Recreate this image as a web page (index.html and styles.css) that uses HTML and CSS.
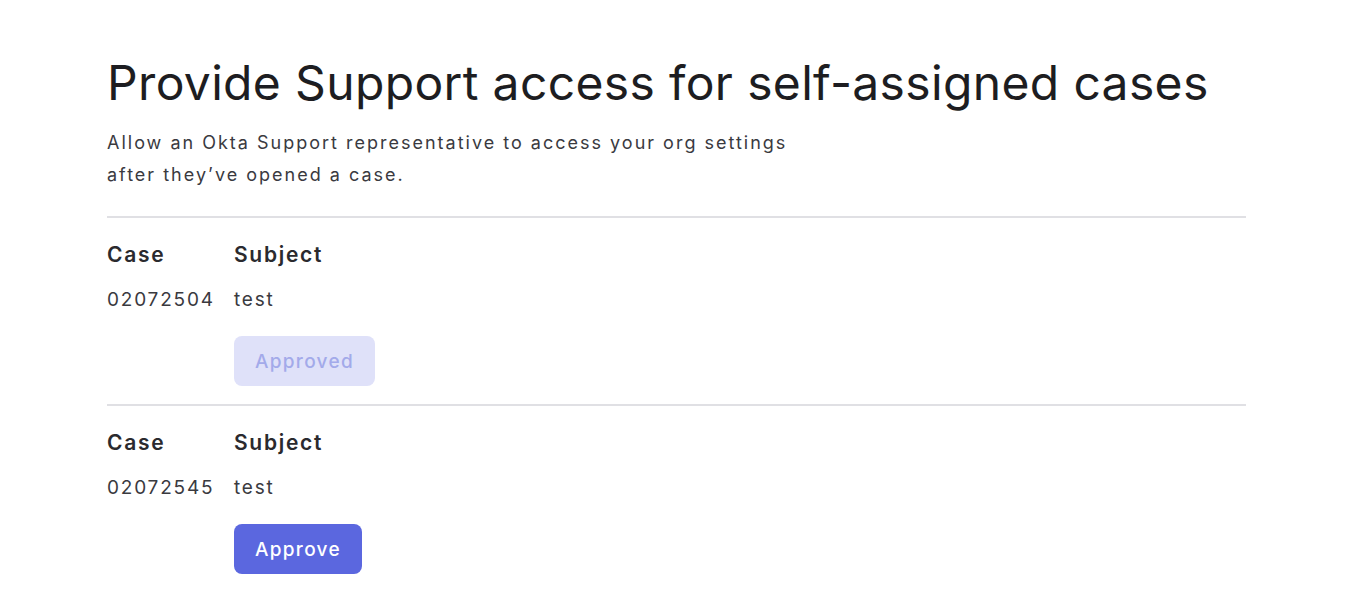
FILE: index.html
```html
<!DOCTYPE html>
<html lang="en">

<head>
  <meta charset="UTF-8">
  <meta name="viewport" content="width=device-width, initial-scale=1">
  <title>Support access</title>
  <link rel="stylesheet" href="styles.css">
</head>

<body>
  <div class="page">
    <h1 class="title">Provide Support access for self-assigned cases</h1>
    <p class="desc">Allow an Okta Support representative to access your org settings<br>after they’ve opened a case.</p>

    <div class="case">
      <div class="label">Case</div>
      <div class="label">Subject</div>
      <div class="value">02072504</div>
      <div class="value">test</div>
      <div></div>
      <div><button class="btn approved" disabled>Approved</button></div>
    </div>

    <div class="case">
      <div class="label">Case</div>
      <div class="label">Subject</div>
      <div class="value">02072545</div>
      <div class="value">test</div>
      <div></div>
      <div><button class="btn approve">Approve</button></div>
    </div>
  </div>
</body>

</html>
```

FILE: styles.css
```css
* {
  box-sizing: border-box;
  margin: 0;
  padding: 0;
}

body {
  background: #fff;
  font-family: Inter, 'Noto Sans', sans-serif;
  color: #1d1d21;
}

.page {
  width: 1139px;
  margin-left: 107px;
  padding-top: 54px;
}

.title {
  font-size: 48px;
  font-weight: 400;
  line-height: 58px;
  letter-spacing: 0.35px;
}

.desc {
  margin-top: 15px;
  font-size: 18px;
  line-height: 32px;
  letter-spacing: 2px;
  color: #3a3a3f;
  padding-bottom: 25px;
}

.case {
  display: grid;
  grid-template-columns: 127px 1fr;
  border-top: 2px solid #e0e0e4;
  padding: 22px 0 18px;
}

.label {
  font-size: 21px;
  font-weight: 600;
  line-height: 30px;
  letter-spacing: 1.7px;
  color: #2a2a2e;
}

.value {
  font-size: 19px;
  line-height: 30px;
  margin-top: 15px;
  letter-spacing: 1.8px;
  color: #3a3a3f;
}

.btn {
  margin-top: 21px;
  height: 50px;
  padding: 0 21px;
  border: none;
  border-radius: 8px;
  font-family: Inter, 'Noto Sans', sans-serif;
  font-size: 19px;
  font-weight: 500;
  letter-spacing: 1.3px;
}

.approved {
  background: #dfe1f9;
  color: #a3aaea;
}

.approve {
  background: #5b67df;
  color: #fff;
}
```
